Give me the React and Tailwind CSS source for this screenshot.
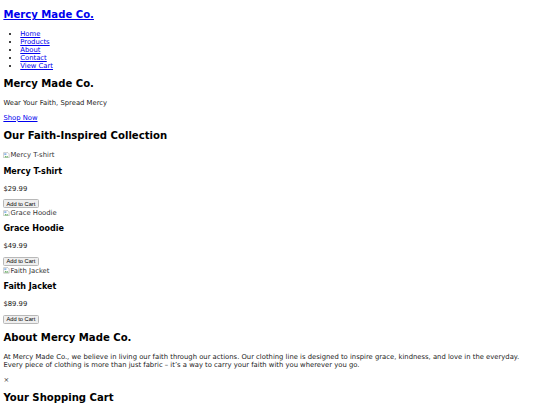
import React from "react";

function BrokenImg({ alt }) {
  return (
    <div className="flex h-[9.33px] items-center text-[#333]">
      <svg width="6.8" height="6.8" viewBox="0 0 16 16" className="shrink-0">
        <path d="M1.5 1.5h10l3 3v10h-13z" fill="#fff" stroke="#9a9a9a" strokeWidth="1.2" />
        <path d="M3 13l3.5-4 2.5 2.5 2-2 2 3.5z" fill="#5aa454" />
        <rect x="3" y="3" width="5" height="4" fill="#8ab4e8" />
      </svg>
      <span className="ml-[0.3px]">{alt}</span>
    </div>
  );
}

function Product({ name, price }) {
  return (
    <div>
      <BrokenImg alt={name} />
      <h3 className="my-[7.937px] text-[8.02px] leading-[8.904px] font-bold text-black">{name}</h3>
      <p className="my-[6.784px] text-[#222]">{price}</p>
      <div className="h-[8.904px]">
        <button className="block h-[8.904px] rounded-[1.5px] border border-[#b8b8b8] bg-[#efefef] px-[2.2px] font-['Liberation_Sans',Arial,sans-serif] text-[5.7px] leading-[6.4px] text-black">
          Add to Cart
        </button>
      </div>
    </div>
  );
}

export default function App() {
  const links = ["Home", "Products", "About", "Contact", "View Cart"];
  return (
    <div className="bg-white px-[3.375px] font-['DejaVu_Sans',sans-serif] text-[6.82px] leading-[8.056px] text-[#222]">
      <header>
        <h1 className="mt-[9.4px] mb-[8.446px] text-[10.1px] leading-[11.872px] font-bold">
          <a href="#" className="text-[#0000ee] underline">Mercy Made Co.</a>
        </h1>
        <nav>
          <ul className="my-[6.784px] list-disc pl-[16.875px] text-black">
            {links.map((l) => (
              <li key={l}>
                <a href="#" className="text-[#0000ee] underline">{l}</a>
              </li>
            ))}
          </ul>
        </nav>
      </header>

      <section>
        <h2 className="my-[8.446px] text-[10.1px] leading-[11.872px] font-bold text-black">Mercy Made Co.</h2>
        <p className="my-[6.784px]">Wear Your Faith, Spread Mercy</p>
        <p className="my-[6.784px]">
          <a href="#" className="text-[#0000ee] underline">Shop Now</a>
        </p>
      </section>

      <section>
        <h2 className="my-[8.446px] text-[10.1px] leading-[11.872px] font-bold text-black">Our Faith-Inspired Collection</h2>
        <Product name="Mercy T-shirt" price="$29.99" />
        <Product name="Grace Hoodie" price="$49.99" />
        <Product name="Faith Jacket" price="$89.99" />
      </section>

      <section>
        <h2 className="my-[8.446px] text-[10.1px] leading-[11.872px] font-bold text-black">About Mercy Made Co.</h2>
        <p className="my-[6.784px]">
          At Mercy Made Co., we believe in living our faith through our actions. Our clothing line is designed to inspire grace, kindness, and love in the everyday. Every piece of clothing is more than just fabric – it’s a way to carry your faith with you wherever you go.
        </p>
      </section>

      <div>
        <div className="text-[#333]">×</div>
        <h2 className="my-[8.446px] text-[10.1px] leading-[11.872px] font-bold text-black">Your Shopping Cart</h2>
      </div>
    </div>
  );
}
